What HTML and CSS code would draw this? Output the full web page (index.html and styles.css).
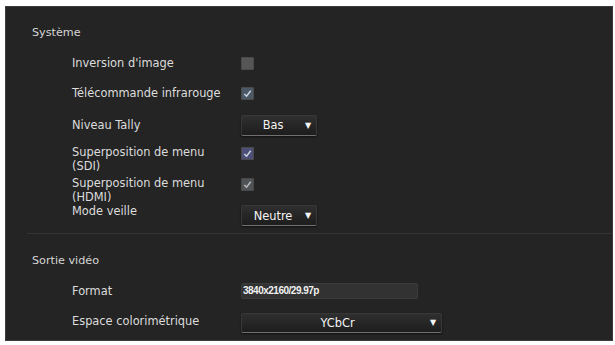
FILE: index.html
```html
<!DOCTYPE html>
<html lang="fr">
<head>
  <meta charset="utf-8">
  <title>Système</title>
  <link rel="stylesheet" href="styles.css">
</head>
<body>
  <div class="panel">
    <div class="section section-system">
      <h2 class="section-title">Système</h2>
      <div class="row row-a">
        <span class="label">Inversion d'image</span>
        <span class="check"></span>
      </div>
      <div class="row row-a">
        <span class="label">Télécommande infrarouge</span>
        <span class="check checked">
          <svg viewBox="0 0 12 12"><path d="M2.5 6.5 L5 9 L9.5 3"/></svg>
        </span>
      </div>
      <div class="row row-b">
        <span class="label">Niveau Tally</span>
        <div class="select select-small">
          <span class="select-text">Bas</span>
          <span class="arrow">&#9660;</span>
        </div>
      </div>
      <div class="row row-c">
        <span class="label">Superposition de menu<br>(SDI)</span>
        <span class="check checked violet">
          <svg viewBox="0 0 12 12"><path d="M2.5 6.5 L5 9 L9.5 3"/></svg>
        </span>
      </div>
      <div class="row row-c">
        <span class="label">Superposition de menu<br>(HDMI)</span>
        <span class="check checked grey">
          <svg viewBox="0 0 12 12"><path d="M2.5 6.5 L5 9 L9.5 3"/></svg>
        </span>
      </div>
      <div class="row row-d">
        <span class="label">Mode veille</span>
        <div class="select select-small">
          <span class="select-text">Neutre</span>
          <span class="arrow">&#9660;</span>
        </div>
      </div>
    </div>
    <div class="section section-video">
      <h2 class="section-title">Sortie vidéo</h2>
      <div class="row row-e">
        <span class="label">Format</span>
        <div class="field">3840x2160/29.97p</div>
      </div>
      <div class="row row-f">
        <span class="label">Espace colorimétrique</span>
        <div class="select select-wide">
          <span class="select-text">YCbCr</span>
          <span class="arrow">&#9660;</span>
        </div>
      </div>
    </div>
  </div>
</body>
</html>
```

FILE: styles.css
```css
body {
  margin: 0;
  background: #fff;
  font-family: "DejaVu Sans", Verdana, sans-serif;
  font-size: 11.4px;
  color: #dcdcdc;
}

.panel {
  box-sizing: border-box;
  width: 608px;
  height: 335px;
  margin: 6px 0 0 5px;
  background: #242424;
  border: 1px solid #3c3c3c;
  overflow: hidden;
}

.section-title {
  margin: 0;
  font-size: 11.2px;
  font-weight: normal;
  line-height: 14px;
  color: #d6d6d6;
}

.section-system {
  padding: 19px 0 0 26px;
}

.section-system .section-title {
  height: 22px;
}

.section-video {
  margin: 6px 0 0 21px;
  padding: 20px 0 0 5px;
  border-top: 1px solid #343434;
}

.section-video .section-title {
  height: 22px;
}

.row {
  display: flex;
  padding-left: 40px;
  box-sizing: border-box;
}

.label {
  width: 169px;
  flex: none;
  line-height: 14px;
  white-space: nowrap;
}

.row-a {
  height: 30px;
  align-items: center;
}

.row-b {
  height: 34px;
  align-items: center;
}

.row-c {
  height: 31px;
  align-items: flex-start;
  padding-top: 3px;
}

.row-c .check {
  margin-top: 2px;
}

.row-d {
  height: 23px;
  align-items: flex-start;
}

.row-d .select {
  margin-top: 1px;
}

.row-e {
  height: 30px;
  align-items: center;
}

.row-f {
  height: 30px;
  align-items: center;
}

.row-f .select {
  margin-top: 3px;
}

.check {
  display: block;
  width: 11px;
  height: 11px;
  background: #565656;
  border: 1px solid #4a4a4a;
  border-radius: 1px;
}

.check svg {
  display: block;
  width: 11px;
  height: 11px;
}

.check path {
  fill: none;
  stroke: #c9d4de;
  stroke-width: 1.6;
}

.check.checked {
  background: #4b5866;
}

.check.violet {
  background: #4d4f78;
}

.check.grey {
  background: #4f5356;
}

.check.grey path {
  stroke: #b8bcbf;
}

.select {
  box-sizing: border-box;
  display: flex;
  align-items: center;
  height: 21px;
  background: linear-gradient(#2f2f2f, #1d1d1d);
  border: 1px solid #383838;
  border-bottom-color: #707070;
  border-radius: 2px;
  color: #f4f4f4;
  box-shadow: 0 1px 2px #111;
}

.select-small {
  width: 76px;
}

.select-wide {
  width: 201px;
  height: 20px;
}

.select-text {
  flex: 1;
  text-align: center;
  padding-left: 4px;
}

.select-wide .select-text {
  padding-left: 8px;
}

.arrow {
  font-size: 8px;
  width: 16px;
  text-align: center;
  color: #f5f5f5;
}

.field {
  box-sizing: border-box;
  width: 177px;
  height: 16px;
  padding-left: 1px;
  background: #323232;
  border: 1px solid #3b3b3b;
  border-radius: 2px;
  font-family: "Liberation Sans", Arial, sans-serif;
  font-size: 10px;
  font-weight: bold;
  line-height: 14px;
  color: #f0f0f0;
  letter-spacing: -0.5px;
}
```
